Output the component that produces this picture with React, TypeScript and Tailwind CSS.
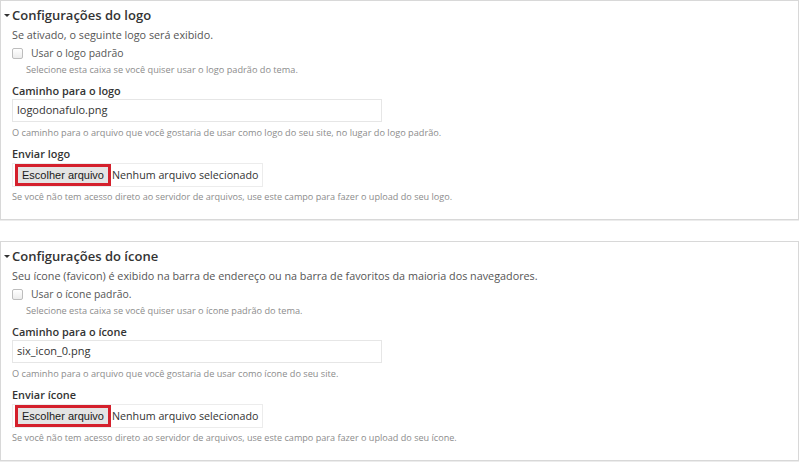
import React from 'react'

interface SettingsPanelProps {
  title: string
  intro: string
  checkboxLabel: string
  checkboxHelp: string
  pathLabel: string
  pathValue: string
  pathHelp: string
  uploadLabel: string
  uploadHelp: string
}

function FileField() {
  return (
    <div className="mt-[1px] flex h-[24px] w-[251px] items-center border border-[#ececec] pl-[2px]">
      {/* highlighted button */}
      <div className="flex h-[22px] w-[96px] shrink-0 items-center justify-center border-[3px] border-[#d4202c] bg-[#e4e4e4]">
        <span className="font-['Liberation_Sans'] text-[11px] leading-none text-[#1a1a1a]">
          Escolher arquivo
        </span>
      </div>
      <span className="ml-[1px] whitespace-nowrap text-[10.7px] leading-none text-[#333]">
        Nenhum arquivo selecionado
      </span>
    </div>
  )
}

function SettingsPanel({
  title,
  intro,
  checkboxLabel,
  checkboxHelp,
  pathLabel,
  pathValue,
  pathHelp,
  uploadLabel,
  uploadHelp,
}: SettingsPanelProps) {
  return (
    <section className="w-[799px] border border-[#d8d8d8] pb-[15px] pl-[11px] shadow-[0_1px_0_#ececec]">
      <div className="relative mt-[3px] flex h-[22px] items-center">
        <span className="absolute left-[-8px] top-[10px] h-0 w-0 border-x-[3px] border-t-[3px] border-x-transparent border-t-[#333]" />
        <h2 className="text-[13px] font-semibold leading-none text-[#333]">{title}</h2>
      </div>

      <p className="mt-[1px] flex h-[17px] items-center text-[10.8px] leading-none text-[#555]">
        {intro}
      </p>

      <label className="mt-[1px] flex h-[16px] items-center">
        <span className="h-[11px] w-[11px] rounded-[2px] border border-[#bdbdbd] bg-gradient-to-b from-white to-[#ececec]" />
        <span className="ml-[8px] text-[10.4px] leading-none text-[#555]">{checkboxLabel}</span>
      </label>

      <p className="ml-[14px] mt-[2px] flex h-[14px] items-center text-[9.2px] leading-none text-[#8c8c8c]">
        {checkboxHelp}
      </p>

      <div className="mt-[6px] flex h-[16px] items-center text-[10.9px] font-semibold leading-none text-[#333]">
        {pathLabel}
      </div>

      <div className="flex h-[23px] w-[370px] items-center border border-[#e6e6e6] pl-[4px] text-[11px] text-[#333]">
        {pathValue}
      </div>

      <p className="mt-[4px] flex h-[14px] items-center text-[9.2px] leading-none text-[#8c8c8c]">
        {pathHelp}
      </p>

      <div className="mt-[6px] flex h-[16px] items-center text-[10.9px] font-semibold leading-none text-[#333]">
        {uploadLabel}
      </div>

      <FileField />

      <p className="mt-[3px] flex h-[14px] items-center text-[9.1px] leading-none text-[#8c8c8c]">
        {uploadHelp}
      </p>
    </section>
  )
}

export default function App() {
  return (
    <div className="h-[462px] w-[800px] overflow-hidden bg-white font-['Open_Sans',sans-serif]">
      <SettingsPanel
        title="Configurações do logo"
        intro="Se ativado, o seguinte logo será exibido."
        checkboxLabel="Usar o logo padrão"
        checkboxHelp="Selecione esta caixa se você quiser usar o logo padrão do tema."
        pathLabel="Caminho para o logo"
        pathValue="logodonafulo.png"
        pathHelp="O caminho para o arquivo que você gostaria de usar como logo do seu site, no lugar do logo padrão."
        uploadLabel="Enviar logo"
        uploadHelp="Se você não tem acesso direto ao servidor de arquivos, use este campo para fazer o upload do seu logo."
      />
      <div className="mt-[21px]">
        <SettingsPanel
          title="Configurações do ícone"
          intro="Seu ícone (favicon) é exibido na barra de endereço ou na barra de favoritos da maioria dos navegadores."
          checkboxLabel="Usar o ícone padrão."
          checkboxHelp="Selecione esta caixa se você quiser usar o ícone padrão do tema."
          pathLabel="Caminho para o ícone"
          pathValue="six_icon_0.png"
          pathHelp="O caminho para o arquivo que você gostaria de usar como ícone do seu site."
          uploadLabel="Enviar ícone"
          uploadHelp="Se você não tem acesso direto ao servidor de arquivos, use este campo para fazer o upload do seu ícone."
        />
      </div>
    </div>
  )
}
